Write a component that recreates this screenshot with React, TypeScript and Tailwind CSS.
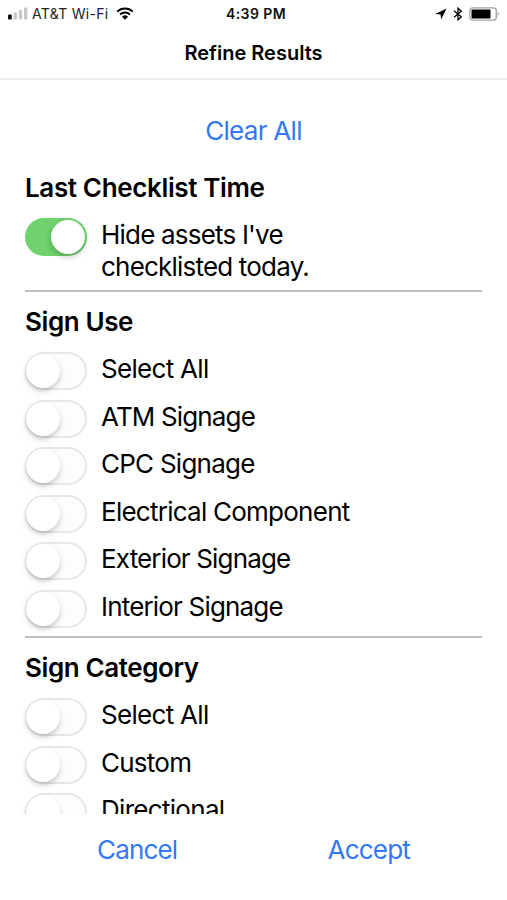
import React from "react";
import clsx from "clsx";

interface FilterOption {
  label: string;
  labelClassName?: string;
  enabled?: boolean;
}

interface FilterGroup {
  title: string;
  titleClassName: string;
  options: FilterOption[];
}

const groups: FilterGroup[] = [
  {
    title: "Last Checklist Time",
    titleClassName: "tracking-[-0.36px]",
    options: [
      {
        label: "Hide assets I've checklisted today.",
        labelClassName: "w-[240px] tracking-[-0.8px]",
        enabled: true,
      },
    ],
  },
  {
    title: "Sign Use",
    titleClassName: "tracking-[-0.4px]",
    options: [
      { label: "Select All", labelClassName: "tracking-[-0.7px]" },
      { label: "ATM Signage", labelClassName: "tracking-[-0.85px]" },
      { label: "CPC Signage" },
      { label: "Electrical Component" },
      { label: "Exterior Signage", labelClassName: "tracking-[-0.85px]" },
      { label: "Interior Signage", labelClassName: "tracking-[-0.82px]" },
    ],
  },
  {
    title: "Sign Category",
    titleClassName: "tracking-[-0.4px]",
    options: [
      { label: "Select All", labelClassName: "tracking-[-0.7px]" },
      { label: "Custom" },
      { label: "Directional", labelClassName: "tracking-[-0.7px]" },
    ],
  },
];

const Toggle: React.FC<{ enabled?: boolean }> = ({ enabled }) => (
  <button
    role="switch"
    aria-checked={!!enabled}
    className={clsx(
      "flex h-[38px] w-[62px] shrink-0 items-center rounded-full",
      enabled
        ? "justify-end bg-[#6fd26d] p-[2px]"
        : "justify-start border-2 border-[#e8e8e8] bg-[#fdfdfd]"
    )}
  >
    <span
      className={clsx(
        "size-[34px] rounded-full bg-white",
        enabled
          ? "shadow-[0_3px_6px_rgba(0,0,0,0.22)]"
          : "-ml-px shadow-[0_3px_4px_rgba(0,0,0,0.16),0_4px_12px_rgba(0,0,0,0.06)]"
      )}
    />
  </button>
);

const StatusBar = () => (
  <div className="flex h-[27px] items-center justify-between pr-[7px] pl-[8px] text-[14px] leading-[27px]">
    <div className="flex w-[164px] items-center">
      <svg width="21" height="13" viewBox="0 0 21 13">
        <rect x="0" y="7.5" width="3.8" height="5" rx="1" fill="#111" />
        <rect x="5.6" y="5.5" width="3.4" height="7" rx="1" fill="#c8c8c8" />
        <rect x="10.8" y="3" width="3.4" height="9.5" rx="1" fill="#c8c8c8" />
        <rect x="16" y="0.5" width="3.4" height="12" rx="1" fill="#c8c8c8" />
      </svg>
      <span className="ml-[3px] tracking-[0.3px] whitespace-nowrap text-[#222]">
        AT&amp;T Wi-Fi
      </span>
      <svg className="ml-[7px]" width="18" height="13" viewBox="0 0 18 13">
        <path
          d="M1.2 4.6a11.3 11.3 0 0 1 15.6 0M4 7.5a7.2 7.2 0 0 1 10 0"
          fill="none"
          stroke="#000"
          strokeWidth="2"
        />
        <path d="M6 9.7a4.3 4.3 0 0 1 6 0L9 12.8Z" fill="#000" />
      </svg>
    </div>
    <span className="text-[14px] font-semibold tracking-[0.4px] text-[#111]">
      4:39 PM
    </span>
    <div className="flex w-[160px] items-center justify-end">
      <svg width="12" height="12" viewBox="0 0 12 12">
        <path d="M11.6.5.3 6l5.3.4.5 5.2Z" fill="#000" />
      </svg>
      <svg className="ml-[6px]" width="10" height="14" viewBox="0 0 10 14">
        <path
          d="m1 3.8 7.3 6L5 12.8V1.2l3.3 3L1 10.2"
          fill="none"
          stroke="#000"
          strokeWidth="1.3"
        />
      </svg>
      <svg className="ml-[6px]" width="31" height="14" viewBox="0 0 31 14">
        <rect
          x="0.8"
          y="0.8"
          width="26.5"
          height="12.4"
          rx="3"
          fill="none"
          stroke="#a3a3a3"
          strokeWidth="1.3"
        />
        <rect x="2.5" y="2.5" width="19" height="9" rx="1" fill="#000" />
        <path d="M28.7 4.8q2 2.2 0 4.4Z" fill="#999" />
      </svg>
    </div>
  </div>
);

const App: React.FC = () => (
  <div className="flex h-[900px] w-[507px] flex-col bg-white font-['Inter','Liberation_Sans',sans-serif] text-black">
    <header className="h-[80px] shrink-0 border-b-2 border-[#ececec]">
      <StatusBar />
      <h1 className="pt-[11px] text-center text-[20px] leading-[31px] font-semibold">
        Refine Results
      </h1>
    </header>

    <main className="h-[734px] shrink-0 overflow-hidden pt-[35px] pr-[25px] pl-[25px]">
      <button className="mx-auto block text-[26px] leading-8 tracking-[-0.7px] text-[#3478f6]">
        Clear All
      </button>
      <div className="pt-[25px]">
        {groups.map((group) => (
          <section
            key={group.title}
            className="mb-[14px] border-b-2 border-[#bfbfbf] pb-[8px]"
          >
            <h2
              className={clsx(
                "text-[26px] leading-8 font-semibold",
                group.titleClassName
              )}
            >
              {group.title}
            </h2>
            <div className="mt-[14px] flex flex-col gap-[9.6px]">
              {group.options.map((option) => (
                <div
                  key={option.label}
                  className="flex min-h-[38px] items-start gap-[14px]"
                >
                  <Toggle enabled={option.enabled} />
                  <span
                    className={clsx(
                      "-mb-px pt-px text-[26px] leading-8",
                      option.labelClassName ?? "tracking-[-0.75px]"
                    )}
                  >
                    {option.label}
                  </span>
                </div>
              ))}
            </div>
          </section>
        ))}
      </div>
    </main>

    <footer className="flex flex-1 items-start justify-between pt-[20px] pr-[97px] pl-[97px] text-[26px] leading-8 text-[#3478f6]">
      <button className="tracking-[-0.85px]">Cancel</button>
      <button className="tracking-[-0.8px]">Accept</button>
    </footer>
  </div>
);

export default App;
